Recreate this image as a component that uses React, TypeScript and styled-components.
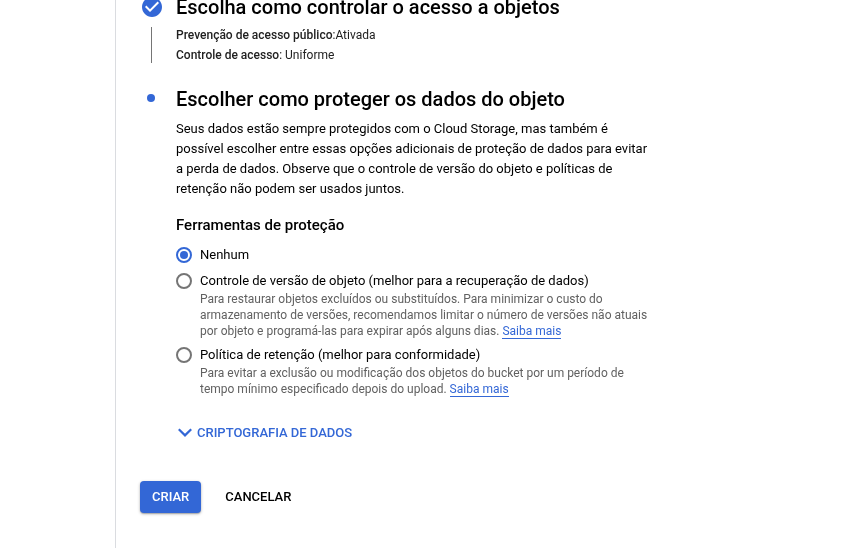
import React from "react";
import styled, { createGlobalStyle } from "styled-components";

const BLUE = "#3367d6";

const GlobalStyle = createGlobalStyle`
  html, body, #root { height: 100%; }
  body {
    margin: 0;
    overflow: hidden;
    background: #fff;
    color: #000;
    font: 400 13px/20px Roboto, Arial, sans-serif;
  }
  * { box-sizing: border-box; }
`;

const Panel = styled.main`
  height: 548px;
  margin-left: 115px;
  padding-left: 24px;
  border-left: 1px solid #dadce0;
  overflow: hidden;
  white-space: nowrap;
  will-change: transform;
`;

const Stepper = styled.div`
  margin-top: -5px;
`;

const Step = styled.section`
  display: grid;
  grid-template-columns: 24px 1fr;
  column-gap: 12px;
  & + & { margin-top: 22px; }
`;

const Marker = styled.div`
  display: flex;
  flex-direction: column;
  svg { display: block; }
`;

const Connector = styled.div`
  width: 1px;
  height: 36px;
  margin: 8px 0 0 11px;
  background: #757575;
`;

const Dot = styled.div`
  width: 8px;
  height: 8px;
  margin: 7px 0 0 7px;
  border-radius: 50%;
  background: ${BLUE};
`;

const Title = styled.h2`
  margin: 0;
  font-size: 20px;
  font-weight: 500;
  line-height: 24px;
`;

const Summary = styled.div`
  margin-top: 6px;
  font-size: 12px;
  color: #212121;
`;

const Strong = styled.span`
  font-weight: 500;
`;

const Description = styled.p`
  margin: 8px 0 16px;
`;

const Subtitle = styled.h3`
  margin: 0 0 10px;
  font-size: 15px;
  font-weight: 500;
  line-height: 20px;
`;

const Option = styled.label`
  display: grid;
  grid-template-columns: 16px 1fr;
  column-gap: 8px;
  & + & { margin-top: 6px; }
`;

const Radio = styled.span<{ $checked?: boolean }>`
  display: flex;
  align-items: center;
  justify-content: center;
  width: 16px;
  height: 16px;
  margin-top: 2px;
  border: 2px solid ${(p) => (p.$checked ? BLUE : "#757575")};
  border-radius: 50%;
  &::after {
    content: "";
    width: 8px;
    height: 8px;
    border-radius: 50%;
    background: ${(p) => (p.$checked ? BLUE : "transparent")};
  }
`;

const Hint = styled.div`
  font-size: 12px;
  line-height: 16px;
  color: #616161;
`;

const Link = styled.a`
  color: ${BLUE};
  border-bottom: 1px solid ${BLUE};
`;

const Expander = styled.button`
  display: flex;
  align-items: center;
  height: 20px;
  margin-top: 26px;
  padding: 0 0 0 2px;
  border: 0;
  background: none;
  color: ${BLUE};
  font: 500 13px/20px Roboto, Arial, sans-serif;
  svg { margin-right: 5px; }
`;

const Actions = styled.div`
  display: flex;
  gap: 12px;
  margin-top: 38px;
`;

const Button = styled.button<{ $primary?: boolean }>`
  height: 32px;
  padding: 0 12px;
  border: 0;
  border-radius: 4px;
  font: 500 13px/32px Roboto, Arial, sans-serif;
  color: ${(p) => (p.$primary ? "#fff" : "#000")};
  background: ${(p) => (p.$primary ? BLUE : "transparent")};
  box-shadow: ${(p) =>
    p.$primary ? "0 1px 3px rgba(0,0,0,.3), 0 1px 1px rgba(0,0,0,.15)" : "none"};
`;

export default function App() {
  return (
    <Panel>
      <GlobalStyle />
      <Stepper>
        <Step>
          <Marker>
            <svg width="24" height="24" viewBox="0 0 24 24">
              <path
                fill={BLUE}
                d="M12 2C6.48 2 2 6.48 2 12s4.48 10 10 10 10-4.48 10-10S17.52 2 12 2zm-2 15l-5-5 1.41-1.41L10 14.17l7.59-7.59L19 8l-9 9z"
              />
            </svg>
            <Connector />
          </Marker>
          <div>
            <Title>Escolha como controlar o acesso a objetos</Title>
            <Summary>
              <div><Strong>Prevenção de acesso público</Strong>:Ativada</div>
              <div><Strong>Controle de acesso</Strong>: Uniforme</div>
            </Summary>
          </div>
        </Step>
        <Step>
          <Marker>
            <Dot />
          </Marker>
          <div>
            <Title>Escolher como proteger os dados do objeto</Title>
            <Description>
              Seus dados estão sempre protegidos com o Cloud Storage, mas também é<br />
              possível escolher entre essas opções adicionais de proteção de dados para evitar<br />
              a perda de dados. Observe que o controle de versão do objeto e políticas de<br />
              retenção não podem ser usados juntos.
            </Description>
            <Subtitle>Ferramentas de proteção</Subtitle>
            <Option>
              <Radio $checked />
              <div>Nenhum</div>
            </Option>
            <Option>
              <Radio />
              <div>
                Controle de versão de objeto (melhor para a recuperação de dados)
                <Hint>
                  Para restaurar objetos excluídos ou substituídos. Para minimizar o custo do<br />
                  armazenamento de versões, recomendamos limitar o número de versões não atuais<br />
                  por objeto e programá-las para expirar após alguns dias. <Link>Saiba mais</Link>
                </Hint>
              </div>
            </Option>
            <Option>
              <Radio />
              <div>
                Política de retenção (melhor para conformidade)
                <Hint>
                  Para evitar a exclusão ou modificação dos objetos do bucket por um período de<br />
                  tempo mínimo especificado depois do upload. <Link>Saiba mais</Link>
                </Hint>
              </div>
            </Option>
            <Expander>
              <svg width="14" height="10" viewBox="0 0 14 10" fill="none" stroke={BLUE} strokeWidth="2.2">
                <path d="M.8 1.3 7 7.4l6.2-6.1" />
              </svg>
              CRIPTOGRAFIA DE DADOS
            </Expander>
          </div>
        </Step>
      </Stepper>
      <Actions>
        <Button $primary>CRIAR</Button>
        <Button>CANCELAR</Button>
      </Actions>
    </Panel>
  );
}
